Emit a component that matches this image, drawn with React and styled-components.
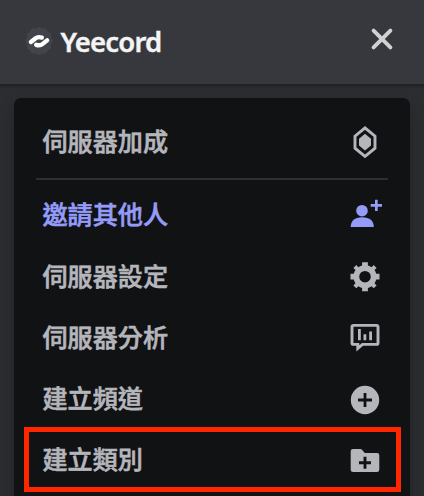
import React from "react";
import styled, { createGlobalStyle } from "styled-components";

const GlobalStyle = createGlobalStyle`
  * { box-sizing: border-box; }
  body { margin: 0; background: #2b2d31; overflow: hidden; }
`;

const Screen = styled.main`
  width: 424px;
  height: 496px;
  overflow: hidden;
  display: flex;
  flex-direction: column;
  background: #2b2d31;
  font-family: "Noto Sans CJK TC", sans-serif;
`;

const Header = styled.header`
  flex: none;
  height: 86px;
  display: flex;
  align-items: center;
  padding: 0 27px 2px 24px;
  background: #37383d;
  border-bottom: 2px solid #222327;
  box-shadow: 0 1px 2px rgba(0, 0, 0, 0.2);
`;

const Logo = styled.svg`
  width: 30px;
  height: 30px;
  flex: none;
`;

const Title = styled.h1`
  margin: 1px 0 0 6.5px;
  flex: 1;
  font: 600 27.5px/36px "Noto Sans", sans-serif;
  letter-spacing: -0.85px;
  -webkit-text-stroke: 0.4px currentColor;
  color: #f4f4f5;
`;

const CloseButton = styled.button`
  width: 30px;
  height: 30px;
  margin-bottom: 4px;
  padding: 0;
  border: 0;
  background: none;
  color: #d0d1d3;
  svg { display: block; }
`;

const Menu = styled.nav`
  flex: none;
  height: 420px;
  margin: 12px 14px 0;
  padding: 13px 22px 0;
  border-radius: 7px;
  background: #111214;
  box-shadow: 0 8px 16px rgba(0, 0, 0, 0.24);
`;

const MenuItem = styled.div`
  position: relative;
  height: 61.25px;
  display: flex;
  align-items: center;
  justify-content: space-between;
  padding: 0 1px 0 6.5px;
  color: ${(p) => (p.$accent ? "#949cf7" : "#b5b6bc")};
`;

const Label = styled.span`
  padding-bottom: 3px;
  font-size: 25.1px;
  line-height: 36px;
  font-weight: 500;
  -webkit-text-stroke: 0.6px currentColor;
`;

const Glyph = styled.svg`
  width: 44px;
  height: 44px;
  flex: none;
`;

const Separator = styled.hr`
  height: 2px;
  margin: 6px 0 4px;
  border: 0;
  background: #2e2f34;
`;

const Highlight = styled.div`
  position: absolute;
  inset: -2px -13px -1px -12px;
  border: 5px solid #ff2600;
`;

const BoostIcon = () => (
  <Glyph viewBox="0 1 44 44">
    <path d="M22 8.8 32 17.2V29.2L22 37.4 12 29.2V17.2Z" fill="none" stroke="currentColor" strokeWidth="2.9" />
    <path d="M22 14.8 28 19.8V26.6L22 31.6 16 26.6V19.8Z" fill="currentColor" />
  </Glyph>
);

const InviteIcon = () => (
  <Glyph viewBox="0 0 44 44" fill="currentColor">
    <circle cx="19" cy="17.7" r="5.8" />
    <path d="M7.7 34C7.7 28 11.5 24.3 19.2 24.3S30.8 28 30.8 34Z" />
    <path d="M32 6.8h2.7v4.3H39v2.7h-4.3v4.3H32v-4.3h-4.3v-2.7H32Z" />
  </Glyph>
);

const GearIcon = () => (
  <Glyph viewBox="0 -0.7 44 44">
    <path
      transform="translate(4.6 4.6) scale(1.45)"
      fill="currentColor"
      fillRule="evenodd"
      d="M19.738 10H22V14H19.739C19.498 14.931 19.1 15.798 18.565 16.564L20 18L18 20L16.565 18.564C15.797 19.099 14.932 19.498 14 19.738V22H10V19.738C9.069 19.498 8.203 19.099 7.436 18.564L6 20L4 18L5.436 16.564C4.901 15.799 4.502 14.932 4.262 14H2V10H4.262C4.502 9.068 4.9 8.202 5.436 7.436L4 6L6 4L7.436 5.436C8.202 4.9 9.068 4.502 10 4.262V2H14V4.261C14.932 4.502 15.797 4.9 16.565 5.435L18 4L20 6L18.564 7.436C19.099 8.202 19.498 9.069 19.738 10ZM12 16A4 4 0 1 0 12 8A4 4 0 0 0 12 16Z"
    />
  </Glyph>
);

const AnalyticsIcon = () => (
  <Glyph viewBox="0 -0.6 44 44">
    <path d="M10.5 9.8H33.5Q35 9.8 35 11.3V27.3Q35 28.8 33.5 28.8H19.5L14.8 32.8V28.8H10.5Q9 28.8 9 27.3V11.3Q9 9.8 10.5 9.8Z" fill="none" stroke="currentColor" strokeWidth="2.9" />
    <path d="M15 13.5h2.8v11.2H15ZM20.5 18.7h2.8v6h-2.8ZM26.2 16H29V24.7h-2.8Z" fill="currentColor" />
  </Glyph>
);

const ChannelIcon = () => (
  <Glyph viewBox="0 -1 44 44">
    <circle cx="22" cy="22" r="14.2" fill="currentColor" />
    <path d="M22 15v14M15 22h14" stroke="#111214" strokeWidth="2.8" />
  </Glyph>
);

const CategoryIcon = () => (
  <Glyph viewBox="0 0 44 44">
    <path d="M10 11H17.3Q18.3 11 19 11.8L21.8 15H34Q36.3 15 36.3 17.3V31.5Q36.3 34 34 34H10Q7.7 34 7.7 31.7V13.3Q7.7 11 10 11Z" fill="currentColor" />
    <path d="M22 18.7v12M16 24.7h12" stroke="#111214" strokeWidth="2.9" />
  </Glyph>
);

const items = [
  { label: "邀請其他人", Icon: InviteIcon, accent: true },
  { label: "伺服器設定", Icon: GearIcon },
  { label: "伺服器分析", Icon: AnalyticsIcon },
  { label: "建立頻道", Icon: ChannelIcon },
  { label: "建立類別", Icon: CategoryIcon, highlighted: true },
];

export default function App() {
  return (
    <Screen>
      <GlobalStyle />
      <Header>
        <Logo viewBox="0 0 30 30">
          <path
            d="M15 .8 18.3 2.5 22 2.3 23.8 5.5 27 7.6 26.9 11.4 29.2 15 26.9 18.6 27 22.4 23.8 24.5 22 27.7 18.3 27.5 15 29.2 11.7 27.5 8 27.7 6.2 24.5 3 22.4 3.1 18.6.8 15 3.1 11.4 3 7.6 6.2 5.5 8 2.3 11.7 2.5Z"
            fill="#41444a"
          />
          <path d="M6.9 16 11.3 12.5Q14 10.3 17.8 11.6M23.1 14.4 18.7 17.9Q16 20.1 12.2 18.8" fill="none" stroke="#fff" strokeWidth="4.4" strokeLinecap="round" strokeLinejoin="round" />
        </Logo>
        <Title>Yeecord</Title>
        <CloseButton aria-label="Close">
          <svg width="30" height="30" viewBox="0 0 30 30">
            <path d="M6.6 6.6 23.4 23.4M23.4 6.6 6.6 23.4" stroke="currentColor" strokeWidth="3.9" strokeLinecap="round" />
          </svg>
        </CloseButton>
      </Header>
      <Menu>
        <MenuItem>
          <Label>伺服器加成</Label>
          <BoostIcon />
        </MenuItem>
        <Separator />
        {items.map(({ label, Icon, accent, highlighted }) => (
          <MenuItem key={label} $accent={accent}>
            <Label>{label}</Label>
            <Icon />
            {highlighted && <Highlight />}
          </MenuItem>
        ))}
      </Menu>
    </Screen>
  );
}
